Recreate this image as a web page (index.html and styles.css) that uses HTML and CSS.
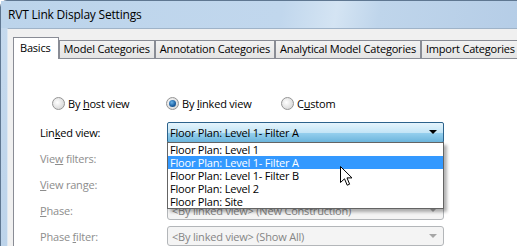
FILE: index.html
```html
<!DOCTYPE html>
<html lang="en">

<head>
    <meta charset="UTF-8">
    <title>RVT Link Display Settings</title>
    <link rel="stylesheet" href="styles.css">
</head>

<body>
    <div class="window">
        <div class="titlebar">RVT Link Display Settings</div>

        <div class="client">
            <!-- Tab strip -->
            <div class="tabs">
                <div class="tab active">Basics</div>
                <div class="tab">Model Categories</div>
                <div class="tab">Annotation Categories</div>
                <div class="tab">Analytical Model Categories</div>
                <div class="tab">Import Categories</div>
            </div>

            <div class="panel">
                <div class="radios">
                    <label class="radio"><span class="dot"></span><span>By <u>h</u>ost view</span></label>
                    <label class="radio checked"><span class="dot"></span><span>By <u>l</u>inked view</span></label>
                    <label class="radio"><span class="dot"></span><span>C<u>u</u>stom</span></label>
                </div>

                <div class="row">
                    <span class="label">Lin<u>k</u>ed view:</span>
                    <div class="combo open">
                        <span>Floor Plan: Level 1- Filter A</span>
                        <span class="arrow"></span>
                        <ul class="droplist">
                            <li>Floor Plan: Level 1</li>
                            <li class="selected">Floor Plan: Level 1- Filter A</li>
                            <li>Floor Plan: Level 1- Filter B</li>
                            <li>Floor Plan: Level 2</li>
                            <li>Floor Plan: Site</li>
                        </ul>
                    </div>
                </div>

                <div class="row disabled">
                    <span class="label">Vie<u>w</u> filters:</span>
                </div>

                <div class="row disabled">
                    <span class="label"><u>V</u>iew range:</span>
                </div>

                <div class="row disabled">
                    <span class="label"><u>P</u>hase:</span>
                    <div class="combo">
                        <span>&lt;By linked view&gt; (New Construction)</span>
                        <span class="arrow"></span>
                    </div>
                </div>

                <div class="row disabled">
                    <span class="label">Phase <u>f</u>ilter:</span>
                    <div class="combo">
                        <span>&lt;By linked view&gt; (Show All)</span>
                        <span class="arrow"></span>
                    </div>
                </div>
            </div>
        </div>
    </div>

    <!-- mouse pointer -->
    <svg class="cursor" width="13" height="21" viewBox="0 0 13 21">
        <path d="M0.5 0.5 L0.5 16.5 L4.5 12.8 L7.2 19.2 L9.6 18.2 L7 11.9 L12 11.9 Z" fill="#fff" stroke="#000" stroke-width="1" stroke-linejoin="miter" />
    </svg>
</body>

</html>
```

FILE: styles.css
```css
* {
    box-sizing: border-box;
}

body {
    margin: 0;
    width: 517px;
    height: 246px;
    overflow: hidden;
    background: #fff;
    font-family: "Open Sans", "Noto Sans", sans-serif;
    font-size: 11px;
    letter-spacing: -0.2px;
    color: #000;
    position: relative;
}

.window {
    width: 540px;
    height: 260px;
    display: flex;
    flex-direction: column;
    background: linear-gradient(#c6daee, #bcd3ea);
    border-top: 1px solid #5f7791;
    border-left: 1px solid #5f7791;
    border-top-left-radius: 7px;
}

.titlebar {
    height: 27px;
    flex: none;
    padding: 4px 0 0 7px;
    font-size: 12px;
    line-height: 20px;
    background: linear-gradient(100deg, #bcd4eb 0%, #c1d7ed 52%, #d4e4f3 62%, #bfd5eb 70%, #b4cce6 100%);
}

.client {
    flex: 1;
    margin-left: 6px;
    display: flex;
    flex-direction: column;
    padding: 8px 0 0 5px;
    background: #f0f0f0;
    border-top: 1px solid #9fb3c8;
    border-left: 1px solid #dde8f3;
}

/* tabs */
.tabs {
    display: flex;
    align-items: flex-end;
    height: 21px;
}

.tab {
    height: 18px;
    padding: 0 4px;
    line-height: 16px;
    text-align: center;
    white-space: nowrap;
    border: 1px solid #898c95;
    border-bottom: none;
    background: linear-gradient(#f2f2f2, #e4e4e4);
}

.tab.active {
    position: relative;
    z-index: 1;
    height: 22px;
    margin-bottom: -1px;
    padding: 0 7px 0 6px;
    line-height: 19px;
    background: #fff;
}

.panel {
    flex: 1;
    background: #fff;
    border: 1px solid #898c95;
    padding: 36px 0 0 26px;
}

/* radio buttons */
.radios {
    display: grid;
    grid-template-columns: 114px 115px auto;
    margin-left: 12px;
    height: 16px;
    margin-bottom: 8px;
}

.radio {
    display: flex;
    align-items: center;
    gap: 3px;
}

.dot {
    width: 13px;
    height: 13px;
    flex: none;
    border-radius: 50%;
    border: 1px solid #959595;
    background: radial-gradient(circle at 40% 40%, #ffffff 0%, #e8e8e8 45%, #cfcfcf 100%);
    position: relative;
}

.radio.checked .dot::after {
    content: "";
    position: absolute;
    left: 2px;
    top: 2px;
    width: 7px;
    height: 7px;
    border-radius: 50%;
    background: radial-gradient(circle at 40% 35%, #6ab3e8 0%, #1f64a6 55%, #0d3c6a 100%);
}

/* form rows */
.row {
    display: flex;
    align-items: center;
    height: 26px;
}

.label {
    width: 127px;
    flex: none;
}

.row.disabled .label {
    color: #8d8d8d;
}

.combo {
    position: relative;
    width: 277px;
    height: 20px;
    display: flex;
    align-items: center;
    justify-content: space-between;
    padding: 0 6px 0 4px;
    border: 1px solid #b3b6b9;
    border-radius: 3px;
    background: #f4f4f4;
    color: #858585;
}

.combo .arrow {
    width: 0;
    height: 0;
    border-left: 4px solid transparent;
    border-right: 4px solid transparent;
    border-top: 4px solid #a6a6a6;
}

.combo.open {
    height: 21px;
    padding-left: 2px;
    color: #000;
    border-color: #2c628b;
    border-radius: 2px;
    background: linear-gradient(#e5f4fc 0%, #c4e5f6 50%, #98d1ef 50%, #6cb5dc 100%);
}

.combo.open .arrow {
    border-top-color: #000;
}

.droplist {
    position: absolute;
    z-index: 2;
    left: -1px;
    top: 100%;
    width: 277px;
    margin: 0;
    padding: 0;
    list-style: none;
    background: #fff;
    border: 1px solid #646464;
    box-shadow: 3px 3px 3px rgba(0, 0, 0, 0.3);
}

.droplist li {
    height: 13px;
    line-height: 13px;
    padding-left: 2px;
    white-space: nowrap;
}

.droplist li.selected {
    background: #3399ff;
    color: #fff;
}

.cursor {
    position: absolute;
    left: 340px;
    top: 166px;
    z-index: 5;
}
```
